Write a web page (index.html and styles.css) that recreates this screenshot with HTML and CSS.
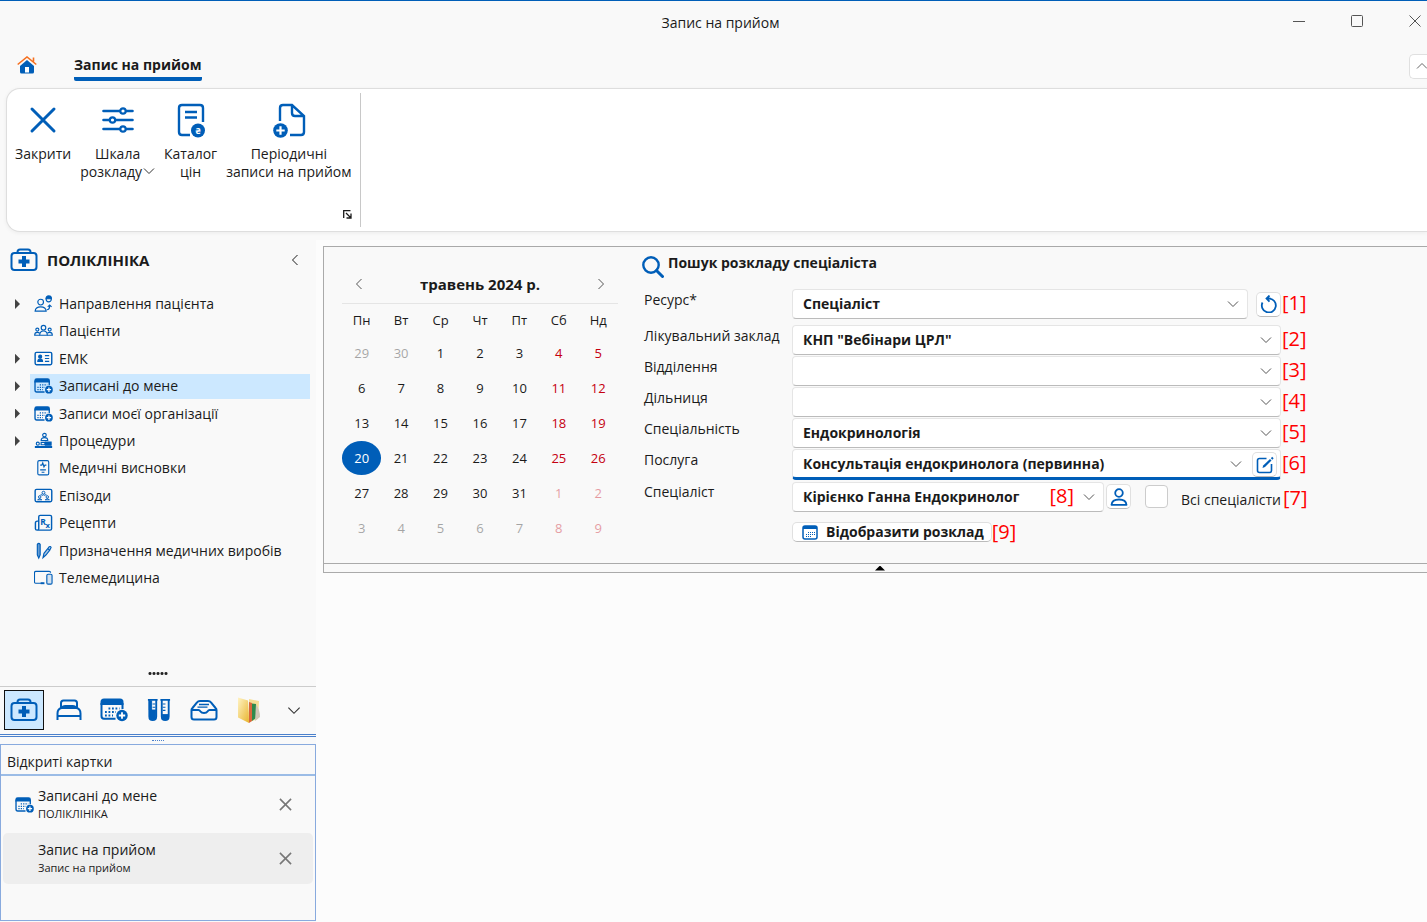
FILE: index.html
```html
<!DOCTYPE html>
<html lang="uk">
<head>
  <meta charset="UTF-8">
  <meta name="viewport" content="width=device-width, initial-scale=1.0">
  <title>Запис на прийом</title>
  <link rel="stylesheet" href="styles.css">
</head>
<body>
  <!-- Icons -->
  <svg class="sprite" aria-hidden="true">
    <symbol id="medkit" viewBox="0 0 28 24">
      <g fill="none" stroke="currentColor" stroke-width="2">
        <rect x="1.500" y="5" width="25" height="17" rx="3"/>
        <path d="M7.500 5V4Q7.500 1.500 10 1.500H18Q20.500 1.500 20.500 4V5"/>
      </g>
      <path d="M12 8h4v3.500h3.500v4H16V19h-4v-3.500H8.500v-4H12z" fill="currentColor"/>
    </symbol>
    <symbol id="calendar-plus" viewBox="0 0 28 24">
      <path d="M15.500 20.800H4Q1.500 20.800 1.500 18V5M22.500 5V11" fill="none" stroke="currentColor" stroke-width="2"/>
      <path d="M.5 7V4Q.5 .500 4 .500H20Q23.500 .500 23.500 4V7z" fill="currentColor"/>
      <path d="M8.500 10.500h11M5 14h11M5 17.500h8" stroke="currentColor" stroke-width="1.800" stroke-dasharray="1.800 1.700"/>
      <circle cx="22" cy="17.500" r="5.700" fill="currentColor"/>
      <path d="M22 14.300v6.400M18.800 17.500h6.400" stroke="#fff" stroke-width="1.800"/>
    </symbol>
    <symbol id="thin-cross" viewBox="0 0 14 14">
      <path d="M1 1l12 12M13 1L1 13" fill="none" stroke="currentColor" stroke-width="1.700"/>
    </symbol>
    <symbol id="chevron" viewBox="0 0 12 8">
      <path d="M1 1.500l5 5 5-5" fill="none" stroke="currentColor"/>
    </symbol>
  </svg>

  <header class="titlebar">
    <span class="titlebar-text">Запис на прийом</span>
    <div class="window-buttons">
      <button aria-label="Згорнути"><svg viewBox="0 0 12 12"><path d="M0 6.500h12"/></svg></button>
      <button aria-label="Розгорнути"><svg viewBox="0 0 12 12"><rect x=".5" y=".5" width="11" height="11" rx="1"/></svg></button>
      <button aria-label="Закрити вікно"><svg viewBox="0 0 12 12"><path d="M.5.500l11 11M11.500.500l-11 11"/></svg></button>
    </div>
  </header>

  <nav class="tabs">
    <a class="home" href="#" aria-label="Головна">
      <svg viewBox="0 0 20 18">
        <path d="M3 10L10 4l7 6v6q0 1.500-1.500 1.500h-11Q3 17.500 3 16z" fill="#005eb8"/>
        <rect x="8" y="11" width="4" height="5.500" fill="#fff"/>
        <path d="M.7 8.500L10 1l9.300 7.500M16.500 1.500v4" fill="none" stroke="#f57020" stroke-width="1.600"/>
      </svg>
    </a>
    <a class="tab" href="#">Запис на прийом</a>
    <button class="collapse-ribbon" aria-label="Згорнути стрічку"><svg><use href="#chevron"/></svg></button>
  </nav>

  <section class="ribbon">
    <div class="ribbon-group">
      <button class="ribbon-button">
        <svg viewBox="0 0 36 36"><path d="M7 7l22 22M29 7L7 29" fill="none" stroke="currentColor" stroke-width="3" stroke-linecap="round"/></svg>
        <span>Закрити</span>
      </button>
      <button class="ribbon-button">
        <svg viewBox="0 0 36 36">
          <path d="M3.500 9h29M3.500 18h29M3.500 27h29" stroke="currentColor" stroke-width="2.600" stroke-linecap="round"/>
          <g fill="#fff" stroke="currentColor" stroke-width="2.200"><circle cx="23" cy="9" r="2.700"/><circle cx="12.500" cy="18" r="2.700"/><circle cx="23" cy="27" r="2.700"/></g>
        </svg>
        <span>Шкала<br>розкладу<svg class="caret"><use href="#chevron"/></svg></span>
      </button>
      <button class="ribbon-button">
        <svg viewBox="0 0 36 36">
          <path d="M17 33H9q-3 0-3-3V6q0-3 3-3h18q3 0 3 3v14M12 10h12M12 15.500h12" fill="none" stroke="currentColor" stroke-width="2.400"/>
          <circle cx="25" cy="28.500" r="7" fill="currentColor"/>
          <text x="25" y="32" fill="#fff" font-size="9" font-weight="700" text-anchor="middle">₴</text>
        </svg>
        <span>Каталог<br>цін</span>
      </button>
      <button class="ribbon-button">
        <svg viewBox="0 0 36 36">
          <path d="M9 19V6q0-3 3-3h9l12 11v16q0 3-3 3H19M21 3v8q0 3 3 3h9" fill="none" stroke="currentColor" stroke-width="2.400"/>
          <circle cx="9.500" cy="28.500" r="7.300" fill="currentColor"/>
          <path d="M9.500 24.300v8.400M5.300 28.500h8.400" stroke="#fff" stroke-width="2.200"/>
        </svg>
        <span>Періодичні<br>записи на прийом</span>
      </button>
      <button class="launcher" aria-label="Параметри групи">
        <svg viewBox="0 0 9 9"><path d="M.7 8V.700H7.500M3 3l4.500 4.500M8 3.500V8H3.500" fill="none" stroke="currentColor" stroke-width="1.300"/></svg>
      </button>
    </div>
  </section>

  <main class="workspace">
    <aside class="sidebar">
      <header class="sidebar-head">
        <svg><use href="#medkit"/></svg>
        <h2>ПОЛІКЛІНІКА</h2>
        <button aria-label="Згорнути панель"><svg class="left"><use href="#chevron"/></svg></button>
      </header>
      <ul class="tree">
        <li class="parent"><a href="#">
          <svg viewBox="0 0 20 18" class="line"><circle cx="7" cy="7" r="3"/><path d="M1.200 16.500q.3-4.500 5.800-4.500t5.800 4.500z"/><circle cx="15.500" cy="4" r="2.700"/><path d="M12.700 3.500q0-3 2.800-3t2.800 3z" fill="currentColor"/><path d="M13.500 15q3 0 3-4.500M14.500 12l2-2 2 2"/></svg>
          Направлення пацієнта</a></li>
        <li><a href="#">
          <svg viewBox="0 0 20 18" class="line"><circle cx="10" cy="5.500" r="2.400"/><path d="M6 13.500q0-4.500 4-4.500t4 4.500z"/><circle cx="3.500" cy="7.500" r="1.600"/><circle cx="16.500" cy="7.500" r="1.600"/><path d="M6 13.500H.700q0-3 2.800-3 1.500 0 2.500.8M14 13.500h5.300q0-3-2.800-3-1.500 0-2.500.8"/></svg>
          Пацієнти</a></li>
        <li class="parent"><a href="#">
          <svg viewBox="0 0 20 18" class="line"><rect x="1.200" y="2" width="17.500" height="13" rx="1.500" stroke-width="1.500"/><circle cx="6.500" cy="6.500" r="1.600" fill="currentColor"/><path d="M4 11.500q0-2.500 2.500-2.500T9 11.500z" fill="currentColor"/><path d="M11.500 5.500h4.500M11.500 8.500h4.500M11.500 11.500h4.500"/></svg>
          ЕМК</a></li>
        <li class="parent active"><a href="#"><svg><use href="#calendar-plus"/></svg>Записані до мене</a></li>
        <li class="parent"><a href="#"><svg><use href="#calendar-plus"/></svg>Записи моєї організації</a></li>
        <li class="parent"><a href="#">
          <svg viewBox="0 0 20 18" class="line"><circle cx="11" cy="2.800" r="1.900"/><path d="M7.500 8.500q0-3 3.500-3t3.500 3z"/><circle cx="4" cy="11.800" r="1.600"/><path d="M7.500 10.500h4v2.500h-4z"/><path d="M12 10h6v3.500h-6zM1.500 14.800h17v1h-17z" fill="currentColor"/></svg>
          Процедури</a></li>
        <li><a href="#">
          <svg viewBox="0 0 20 18" class="line"><rect x="4" y="1.200" width="11.500" height="15" rx="1.500"/><path d="M6.500 6h1.700l1-2.300 1.300 4 1-1.700h1.500M6.500 11h6M8 13.500h3"/></svg>
          Медичні висновки</a></li>
        <li><a href="#">
          <svg viewBox="0 0 20 18" class="line"><rect x="1.200" y="2" width="17.500" height="13" rx="1.500" stroke-width="1.500"/><g stroke-width="1"><circle cx="10" cy="5.500" r="1.500"/><circle cx="6" cy="10" r="1.300"/><circle cx="14" cy="10" r="1.300"/><path d="M8.500 6.500L6.500 8.500M11.500 6.500l2 2M3.800 13q2.200-2.500 4.400 0zM11.800 13q2.200-2.500 4.400 0zM8 8.500q2-1.500 4 0"/></g></svg>
          Епізоди</a></li>
        <li><a href="#">
          <svg viewBox="0 0 20 18" class="line"><path d="M5 7H3.500Q1.500 7 1.500 9v6q0 1.500 1.700 1.500Q5 16.500 5 15V2.500Q5 1 6.500 1H17q1.500 0 1.500 1.500V15q0 1.500-1.500 1.500H3.500" stroke-width="1.500"/><text x="6.500" y="11" font-size="9" font-weight="700" fill="currentColor" stroke="none">R</text><text x="12" y="14" font-size="8" font-weight="700" fill="currentColor" stroke="none">x</text></svg>
          Рецепти</a></li>
        <li><a href="#">
          <svg viewBox="0 0 20 18" class="line"><path d="M3.500 2q1.500-2 3 0v11L5 16.500 3.500 13z" fill="currentColor" fill-opacity=".6"/><path d="M9.500 16l1-4.500 4-5 2 1.700-4 5zM14.500 6.500l1.500-2q1.500-.8 2 .7l-1.500 3" fill="currentColor" fill-opacity=".3"/></svg>
          Призначення медичних виробів</a></li>
        <li><a href="#">
          <svg viewBox="0 0 20 18" class="line"><path d="M10 14.500H2q-1.500 0-1.500-1.500V3.500Q.5 2 2 2h14Q17.500 2 17.500 3.500"/><rect x="13.500" y="5" width="5.500" height="10.500" rx="1.300" fill="currentColor" fill-opacity=".15"/><path d="M7 14.500h4" stroke-width="2"/></svg>
          Телемедицина</a></li>
      </ul>

      <div class="sidebar-dots"></div>
      <nav class="modules">
        <button class="selected" aria-label="Поліклініка"><svg><use href="#medkit"/></svg></button>
        <button aria-label="Стаціонар">
          <svg viewBox="0 0 28 24" fill="none" stroke="currentColor" stroke-width="2"><path d="M6 10V5Q6 2.500 8.500 2.500h11Q22 2.500 22 5v5" /><path d="M2.500 22v-6.500q0-4.500 4-5.500h15q4 1 4 5.500V22M2.500 18h23"/><path d="M7 9.500q1-1.500 3-1.500h8q2 0 3 1.500z" fill="currentColor"/></svg>
        </button>
        <button aria-label="Календар"><svg><use href="#calendar-plus"/></svg></button>
        <button aria-label="Лабораторія">
          <svg viewBox="0 0 28 26" fill="none" stroke="currentColor" stroke-width="2"><path d="M2 2h10.500M15.500 2H26M3.500 2v18q0 4 3.700 4t3.800-4V2M17 2v18q0 4 3.700 4t3.800-4V2"/><path d="M4 13h6.500v7q0 3.500-3.300 3.500T4 20zM17.500 18H24v2q0 3.500-3.300 3.500T17.500 20zM3.500 3H6v10H3.500z" fill="currentColor" stroke-width="1"/><path d="M7 6.500h3M7 10h3M18 6.500h3M18 10h3M18 13.500h3" stroke-width="1.300"/></svg>
        </button>
        <button aria-label="Архів">
          <svg viewBox="0 0 28 24" fill="none" stroke="currentColor" stroke-width="2"><path d="M1.500 12q0-1 1-2l4.500-5.500Q8 3 10 3h8q2 0 3 1.500l4.500 5.500q1 1 1 2v7q0 2.500-2.500 2.500H4q-2.500 0-2.500-2.500zM1.500 12h7q1 0 2 1.500T14 15t3.500-1.500 2-1.500h7"/><path d="M9 6.500h10M7.500 9.200h10" stroke-width="1.300"/></svg>
        </button>
        <button aria-label="Документи">
          <svg class="folder" viewBox="0 0 28 28"><defs><linearGradient id="folder" x2="1" y2="1"><stop stop-color="#fff3c4"/><stop offset="1" stop-color="#e8b52e"/></linearGradient></defs>
            <path d="M14 3l10 2-1 18-9 3z" fill="#f6dd92"/><path d="M14 6l3 1v18l-3 2z" fill="#d9683c"/><path d="M17 7.500l4 .5v14l-4 3z" fill="#2f8a4c"/><path d="M21 8q4 6 4 13l-5 4z" fill="#cfc8b6"/><path d="M3 1.500L13 4.500q1 11 1 22.500L3 21.500z" fill="url(#folder)"/></svg>
        </button>
        <button aria-label="Більше"><svg class="more"><use href="#chevron"/></svg></button>
      </nav>
      <div class="splitter"></div>

      <section class="open-cards">
        <h3>Відкриті картки</h3>
        <div class="card">
          <svg class="card-icon"><use href="#calendar-plus"/></svg>
          <p>Записані до мене<small>ПОЛІКЛІНІКА</small></p>
          <button aria-label="Закрити картку"><svg><use href="#thin-cross"/></svg></button>
        </div>
        <div class="card current">
          <span class="card-icon"></span>
          <p>Запис на прийом<small>Запис на прийом</small></p>
          <button aria-label="Закрити картку"><svg><use href="#thin-cross"/></svg></button>
        </div>
      </section>
    </aside>

    <div class="content">
      <section class="panel">
        <div class="calendar">
          <div class="calendar-head">
            <button aria-label="Попередній місяць"><svg class="left"><use href="#chevron"/></svg></button>
            <strong>травень 2024 р.</strong>
            <button aria-label="Наступний місяць"><svg class="right"><use href="#chevron"/></svg></button>
          </div>
          <table>
            <thead>
              <tr><th>Пн</th><th>Вт</th><th>Ср</th><th>Чт</th><th>Пт</th><th>Сб</th><th>Нд</th></tr>
            </thead>
            <tbody>
              <tr><td class="other"><button>29</button></td><td class="other"><button>30</button></td><td><button>1</button></td><td><button>2</button></td><td><button>3</button></td><td><button>4</button></td><td><button>5</button></td></tr>
              <tr><td><button>6</button></td><td><button>7</button></td><td><button>8</button></td><td><button>9</button></td><td><button>10</button></td><td><button>11</button></td><td><button>12</button></td></tr>
              <tr><td><button>13</button></td><td><button>14</button></td><td><button>15</button></td><td><button>16</button></td><td><button>17</button></td><td><button>18</button></td><td><button>19</button></td></tr>
              <tr><td class="today"><button>20</button></td><td><button>21</button></td><td><button>22</button></td><td><button>23</button></td><td><button>24</button></td><td><button>25</button></td><td><button>26</button></td></tr>
              <tr><td><button>27</button></td><td><button>28</button></td><td><button>29</button></td><td><button>30</button></td><td><button>31</button></td><td class="other"><button>1</button></td><td class="other"><button>2</button></td></tr>
              <tr><td class="other"><button>3</button></td><td class="other"><button>4</button></td><td class="other"><button>5</button></td><td class="other"><button>6</button></td><td class="other"><button>7</button></td><td class="other"><button>8</button></td><td class="other"><button>9</button></td></tr>
            </tbody>
          </table>
        </div>

        <form class="search">
          <h1>
            <svg viewBox="0 0 22 22"><circle cx="9" cy="9" r="7.700" fill="none" stroke="currentColor" stroke-width="2.400"/><path d="M14.500 14.500l6 6" stroke="currentColor" stroke-width="3" stroke-linecap="round"/></svg>
            Пошук розкладу спеціаліста
          </h1>

          <div class="row first">
            <label for="resource">Ресурс*</label>
            <div class="field">
              <div class="combo"><select id="resource"><option>Спеціаліст</option></select><svg><use href="#chevron"/></svg></div>
              <button type="button" class="icon-button" aria-label="Оновити">
                <svg viewBox="0 0 18 18"><path d="M2.500 7.500a7 7 0 1 0 6.500-4H6.500M9.500.500l-3 3 3 3.200" fill="none" stroke="currentColor" stroke-width="1.800"/></svg>
              </button>
            </div>
            <b class="mark">[1]</b>
          </div>
          <div class="row">
            <label for="clinic">Лікувальний заклад</label>
            <div class="field"><div class="combo"><select id="clinic"><option>КНП "Вебінари ЦРЛ"</option></select><svg><use href="#chevron"/></svg></div></div>
            <b class="mark">[2]</b>
          </div>
          <div class="row">
            <label for="department">Відділення</label>
            <div class="field"><div class="combo"><select id="department"><option></option></select><svg><use href="#chevron"/></svg></div></div>
            <b class="mark">[3]</b>
          </div>
          <div class="row">
            <label for="district">Дільниця</label>
            <div class="field"><div class="combo"><select id="district"><option></option></select><svg><use href="#chevron"/></svg></div></div>
            <b class="mark">[4]</b>
          </div>
          <div class="row">
            <label for="speciality">Спеціальність</label>
            <div class="field"><div class="combo"><select id="speciality"><option>Ендокринологія</option></select><svg><use href="#chevron"/></svg></div></div>
            <b class="mark">[5]</b>
          </div>
          <div class="row">
            <label for="service">Послуга</label>
            <div class="field">
              <div class="combo focused">
                <select id="service"><option>Консультація ендокринолога (первинна)</option></select><svg><use href="#chevron"/></svg>
                <button type="button" class="icon-button inside" aria-label="Редагувати послугу">
                  <svg viewBox="0 0 18 18"><path d="M10.500 2.500H3.500q-2 0-2 2v10q0 2 2 2h10q2 0 2-2V8" fill="none" stroke="currentColor" stroke-width="1.600"/><path d="M6.500 12l.7-2.500L14 3l1.500 1.500L9 11z" fill="currentColor"/><path d="M15.500 1.500l1.500 1.500" stroke="currentColor" stroke-width="1.800"/></svg>
                </button>
              </div>
            </div>
            <b class="mark">[6]</b>
          </div>
          <div class="row last">
            <label for="doctor">Спеціаліст</label>
            <div class="field doctor">
              <div class="combo"><select id="doctor"><option>Кірієнко Ганна Ендокринолог</option></select><svg><use href="#chevron"/></svg><b class="mark over">[8]</b></div>
              <button type="button" class="icon-button" aria-label="Картка спеціаліста">
                <svg viewBox="0 0 18 18" fill="none" stroke="currentColor" stroke-width="1.800"><circle cx="9" cy="5" r="3.800"/><path d="M1.500 16.800q.5-5.300 7.500-5.300t7.500 5.300z" stroke-linejoin="round"/></svg>
              </button>
              <input type="checkbox" id="all-doctors">
              <label for="all-doctors">Всі спеціалісти</label>
            </div>
            <b class="mark">[7]</b>
          </div>
          <div class="actions">
            <button type="button" class="show-schedule">
              <svg viewBox="0 0 16 15"><rect x="1" y="1" width="14" height="13" rx="2" fill="#fff" stroke="currentColor" stroke-width="1.500"/><path d="M1 2q0-1 1-1h12q1 0 1 1v2H1z" fill="currentColor"/><path d="M6 7.500h7M4 9.500h9M4 11.500h5" stroke="currentColor" stroke-dasharray="1 1"/></svg>
              Відобразити розклад
            </button>
            <b class="mark">[9]</b>
          </div>
        </form>
      </section>
      <button class="panel-toggle" aria-label="Згорнути пошук"></button>
    </div>
  </main>
</body>
</html>
```
FILE: styles.css
```css
* {
  box-sizing: border-box;
}

body {
  display: flex;
  flex-direction: column;
  min-height: 100vh;
  margin: 0;
  overflow-x: hidden;
  border-top: 1px solid #005eb8;
  font: 14px/18px "Open Sans", "Noto Sans", sans-serif;
  color: #1b1b1b;
  background: #f9f9f9;
}

button {
  padding: 0;
  border: none;
  background: none;
  color: inherit;
  font: inherit;
}

a {
  color: inherit;
  text-decoration: none;
}

svg {
  display: block;
  flex-shrink: 0;
}

.sprite {
  position: absolute;
  width: 0;
  height: 0;
}

.left {
  transform: rotate(90deg);
}

.right {
  transform: rotate(-90deg);
}

/* Title bar */
.titlebar {
  position: relative;
  display: flex;
  align-items: center;
  justify-content: center;
  height: 43px;
}

.titlebar-text {
  padding-left: 14px;
}

.window-buttons {
  position: absolute;
  top: 14px;
  right: 6px;
  display: flex;
  gap: 46px;
}

.window-buttons svg {
  width: 12px;
  height: 12px;
  fill: none;
  stroke: #555;
}

/* Tabs */
.tabs {
  display: flex;
  align-items: center;
  height: 44px;
  padding-left: 17px;
}

.home {
  padding-bottom: 3px;
}

.home svg {
  width: 20px;
  height: 18px;
}

.tab {
  margin: 4px 0 0 37px;
  padding-bottom: 3px;
  border-bottom: 4px solid #005eb8;
  border-radius: 2px;
  font-weight: 700;
}

.collapse-ribbon {
  width: 18px;
  height: 25px;
  margin-left: auto;
  padding-left: 6px;
  border: 1px solid #e0e0e0;
  border-right: none;
  border-radius: 5px 0 0 5px;
  background: #fff;
}

.collapse-ribbon svg {
  width: 12px;
  height: 8px;
  color: #666;
  transform: rotate(180deg);
}

/* Ribbon */
.ribbon {
  display: flex;
  height: 144px;
  margin: 0 0 8px 6px;
  padding: 4px 0;
  border: 1px solid #dedede;
  border-right: none;
  border-radius: 14px 0 0 14px;
  background: #fff;
  box-shadow: 0 1px 4px rgba(0, 0, 0, 0.06);
}

.ribbon-group {
  position: relative;
  display: flex;
  align-items: flex-start;
  gap: 9px;
  padding: 9px 8px 0 8px;
  border-right: 1px solid #c8c8c8;
}

.ribbon-button {
  display: flex;
  flex-direction: column;
  align-items: center;
  gap: 7px;
}

.ribbon-button > svg {
  width: 36px;
  height: 36px;
  color: #005eb8;
}

.caret {
  display: inline-block;
  width: 12px;
  height: 8px;
  margin-left: 1px;
  color: #333;
  vertical-align: 2px;
}

.launcher {
  position: absolute;
  right: 8px;
  bottom: 8px;
}

.launcher svg {
  width: 9px;
  height: 9px;
}

/* Sidebar */
.workspace {
  display: flex;
  flex: 1;
  background: #fcfcfc;
}

.sidebar {
  display: flex;
  flex-direction: column;
  flex: 0 0 316px;
  background: #f9f9f9;
}

.sidebar-head {
  display: flex;
  align-items: center;
  gap: 9px;
  height: 40px;
  padding: 0 15px 0 10px;
}

.sidebar-head > svg {
  width: 28px;
  height: 24px;
  color: #005eb8;
}

.sidebar-head h2 {
  flex: 1;
  margin: 0;
  font-size: 15px;
}

.sidebar-head button svg {
  width: 12px;
  height: 8px;
}

.tree {
  display: flex;
  flex-direction: column;
  justify-content: space-between;
  height: 300px;
  margin: 11px 6px 0 0;
  padding: 0;
  list-style: none;
}

.tree li {
  display: flex;
  align-items: center;
  height: 26px;
  padding-left: 30px;
}

.tree .parent {
  padding-left: 15px;
}

.tree .parent::before {
  content: "";
  width: 15px;
  height: 10px;
  background: #444;
  clip-path: polygon(0 0, 5px 50%, 0 100%);
}

.tree a {
  display: flex;
  flex: 1;
  align-items: center;
  gap: 6px;
  height: 25px;
  padding-left: 4px;
}

.tree .active a {
  background: #cce8ff;
}

.tree svg {
  width: 19px;
  height: 18px;
  color: #005eb8;
}

.line {
  fill: none;
  stroke: currentColor;
  stroke-width: 1.2;
}

.sidebar-dots {
  width: 20px;
  height: 3px;
  margin: auto auto 11px;
  background: radial-gradient(circle, #222 1px, transparent 2px) 0 0 / 4px 3px;
}

.modules {
  display: flex;
  align-items: center;
  gap: 5px;
  padding: 3px 0 4px 4px;
  border-top: 1px solid #ccc;
}

.modules button {
  display: grid;
  place-items: center;
  width: 40px;
  height: 40px;
}

.modules .selected {
  border: 1px solid #111;
  background: #cce8ff;
}

.modules svg {
  width: 28px;
  height: 24px;
  color: #005eb8;
}

.modules .folder {
  height: 28px;
}

.modules .more {
  width: 14px;
  height: 9px;
  color: #333;
}

.splitter {
  height: 10px;
  border-top: 3px double #4a80cc;
}

.splitter::after {
  content: "";
  display: block;
  width: 12px;
  margin: 3px auto 0;
  border-top: 1px dotted #4a80cc;
}

.open-cards {
  height: 177px;
  margin-bottom: 1px;
  border: 1px solid #88aade;
}

.open-cards h3 {
  height: 31px;
  margin: 0 0 3px;
  padding: 8px 6px 0;
  border-bottom: 2px solid #9bbce6;
  font-size: 14px;
  font-weight: 400;
}

.card {
  display: flex;
  align-items: center;
  height: 51px;
  margin: 0 2px 3px 2px;
  padding: 0 21px 0 12px;
  border-radius: 5px;
}

.current {
  background: #eee;
}

.card-icon {
  width: 19px;
  height: 18px;
  color: #005eb8;
}

.card p {
  flex: 1;
  margin: 0 4px;
}

.card small {
  display: block;
  font-size: 11px;
}

.card button svg {
  width: 13px;
  height: 13px;
  color: #777;
}

/* Schedule search panel */
.content {
  flex: 1;
  min-width: 0;
  padding: 6px 0 0 7px;
}

.panel {
  display: flex;
  min-height: 318px;
  border: 1px solid #aaa;
  border-right: none;
  background: #f9f9f9;
}

.calendar {
  width: 276px;
  margin: 18px 24px 0 18px;
  font-size: 13px;
}

.calendar-head {
  display: flex;
  align-items: center;
  justify-content: space-between;
  height: 39px;
  padding: 0 11px;
  border-bottom: 1px solid #e5e5e5;
}

.calendar-head strong {
  font-size: 15px;
}

.calendar-head svg {
  width: 12px;
  height: 8px;
  color: #555;
}

.calendar table {
  width: 100%;
  border-collapse: collapse;
  table-layout: fixed;
}

.calendar th {
  height: 31px;
  padding: 0;
  font-weight: 500;
}

.calendar td {
  height: 35px;
  padding: 0;
}

.calendar td button {
  width: 100%;
  height: 34px;
}

.calendar td:nth-child(n + 6) {
  color: #c50010;
}

.calendar .other {
  opacity: 0.38;
}

.calendar .today button {
  border-radius: 50%;
  background: #005eb8;
  color: #fff;
}

.search {
  padding-top: 6px;
}

.search h1 {
  display: flex;
  gap: 4px;
  height: 36px;
  margin: 0;
  font-size: 14px;
  line-height: 20px;
}

.search h1 svg {
  width: 22px;
  height: 22px;
  margin-top: 3px;
  color: #005eb8;
}

.row {
  display: grid;
  grid-template-columns: 148px 489px auto;
  height: 30px;
  margin: 0 0 1px 2px;
}

.row.first {
  margin-bottom: 6px;
}

.row.last {
  margin-top: 2px;
}

.row > label {
  line-height: 22px;
}

.field {
  display: flex;
  align-items: center;
}

.combo {
  position: relative;
  flex: 1;
  height: 30px;
}

.combo select {
  width: 100%;
  height: 30px;
  padding: 0 32px 0 10px;
  border: 1px solid #e5e5e5;
  border-bottom-color: #bbb;
  border-radius: 4px;
  appearance: none;
  background: #fff;
  color: inherit;
  font: 700 14px/18px "Open Sans", "Noto Sans", sans-serif;
}

.combo > svg {
  position: absolute;
  top: 11px;
  right: 9px;
  width: 12px;
  height: 8px;
  color: #555;
  pointer-events: none;
}

.combo.focused,
.focused select {
  height: 31px;
}

.focused select {
  border-bottom: 3px solid #005eb8;
}

.focused > svg {
  right: 39px;
}

.icon-button {
  display: grid;
  place-items: center;
  width: 25px;
  height: 25px;
  border: 1px solid #e0e0e0;
  border-bottom-color: #bbb;
  border-radius: 5px;
  background: #fff;
  color: #005eb8;
}

.icon-button svg {
  width: 18px;
  height: 18px;
}

.first .icon-button {
  margin-left: 8px;
}

.inside {
  position: absolute;
  top: 3px;
  right: 4px;
}

.doctor .combo {
  flex: 0 0 312px;
}

.doctor .icon-button {
  margin-left: 2px;
}

.field input {
  width: 23px;
  height: 23px;
  margin: 0 13px 0 14px;
  border: 1px solid #ccc;
  border-radius: 4px;
  appearance: none;
  background: #fff;
}

.doctor label {
  padding-top: 6px;
  white-space: nowrap;
}

.mark {
  color: #f00;
  font: 20px/28px "Open Sans", "Noto Sans", sans-serif;
}

.row > .mark {
  padding-left: 1px;
}

.last > .mark {
  padding: 3px 0 0 2px;
}

.over {
  position: absolute;
  top: 0;
  right: 30px;
}

.actions {
  display: flex;
  align-items: center;
  height: 20px;
  margin: 11px 0 0 150px;
}

.show-schedule {
  display: flex;
  align-items: center;
  gap: 8px;
  height: 20px;
  padding: 0 7px 0 9px;
  border: 1px solid #e0e0e0;
  border-bottom-color: #bbb;
  border-radius: 5px;
  background: #fff;
  font-weight: 700;
}

.show-schedule svg {
  width: 16px;
  height: 15px;
  color: #005eb8;
}

.panel-toggle {
  display: grid;
  place-items: center;
  width: 100%;
  height: 9px;
  padding-left: 9px;
  border: 1px solid #aaa;
  border-top: none;
  border-right: none;
  background: #f9f9f9;
}

.panel-toggle::before {
  content: "";
  width: 10px;
  height: 5px;
  background: #000;
  clip-path: polygon(50% 0, 100% 100%, 0 100%);
}
```
